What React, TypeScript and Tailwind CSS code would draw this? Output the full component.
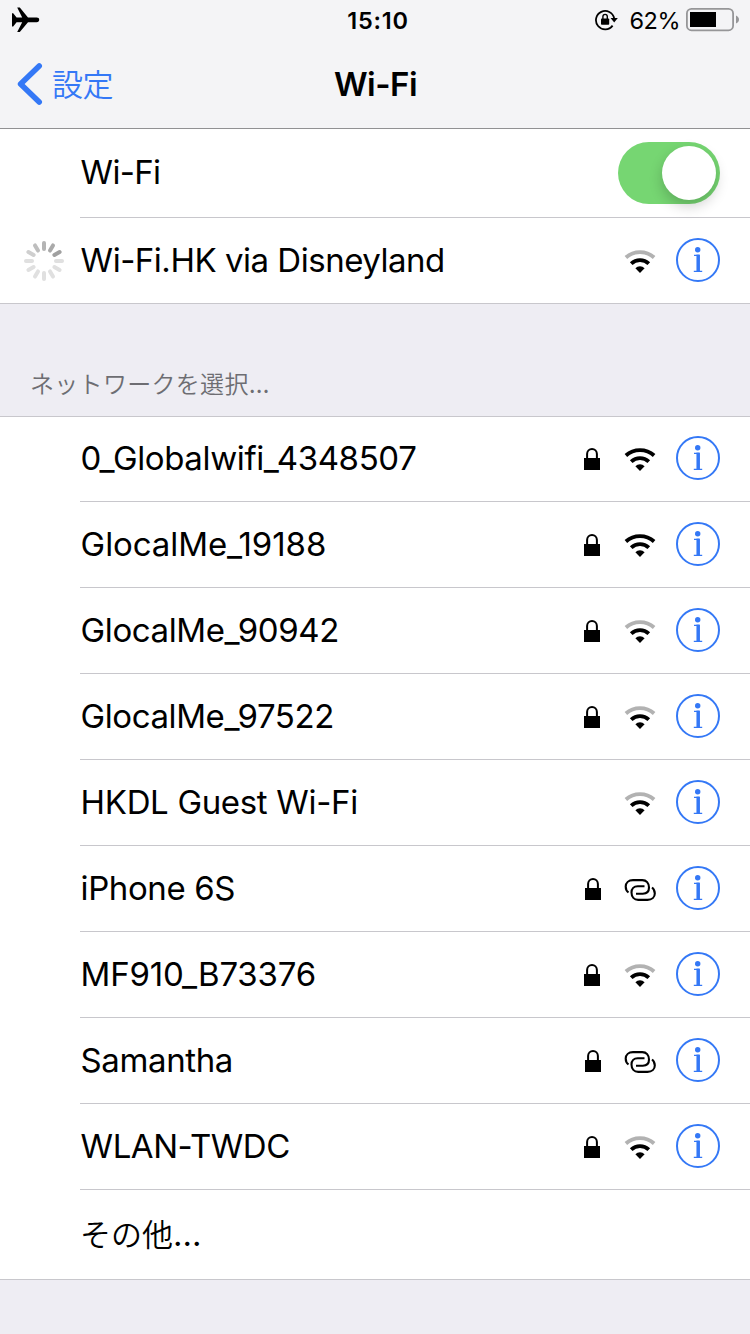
import type { ReactNode } from "react"
import clsx from "clsx"

type Signal = "strong" | "medium" | "hotspot"

interface Network {
  name: string
  secured: boolean
  signal: Signal
  tracking: string
}

const networks: Network[] = [
  { name: "0_Globalwifi_4348507", secured: true, signal: "strong", tracking: "tracking-[-0.37px]" },
  { name: "GlocalMe_19188", secured: true, signal: "strong", tracking: "tracking-[-0.08px]" },
  { name: "GlocalMe_90942", secured: true, signal: "medium", tracking: "tracking-[-0.4px]" },
  { name: "GlocalMe_97522", secured: true, signal: "medium", tracking: "tracking-[-0.42px]" },
  { name: "HKDL Guest Wi-Fi", secured: false, signal: "medium", tracking: "tracking-[-0.33px]" },
  { name: "iPhone 6S", secured: true, signal: "hotspot", tracking: "tracking-[-0.4px]" },
  { name: "MF910_B73376", secured: true, signal: "medium", tracking: "tracking-[-0.2px]" },
  { name: "Samantha", secured: true, signal: "hotspot", tracking: "tracking-[-0.4px]" },
  { name: "WLAN-TWDC", secured: true, signal: "medium", tracking: "tracking-[-0.45px]" },
]

function AirplaneIcon() {
  return (
    <svg width="28" height="26" viewBox="0 0 28 26">
      <path d="M0 6.2h1.2L4.6 10.4h5.6L5.2 0.6h2.6L16 10.4h8.6a2.6 2.4 0 0 1 0 4.8H16L7.8 25H5.2l5-9.8H4.6L1.2 19.4H0z" fill="black" />
    </svg>
  )
}

function RotationLockIcon() {
  return (
    <svg width="24" height="22" viewBox="0 0 24 22" fill="none">
      <path d="M19.2 9.4A9.2 9.2 0 1 0 17.6 16.6" stroke="black" strokeWidth="1.8" />
      <path d="M15.6 9h7.2l-3.6 4.4z" fill="black" />
      <path d="M7.9 10V7.6a2.2 2.2 0 0 1 4.4 0V10" stroke="black" strokeWidth="1.4" />
      <rect x="6" y="9.4" width="8.2" height="6.4" rx="0.8" fill="black" />
    </svg>
  )
}

function BatteryIcon() {
  return (
    <svg width="54" height="24" viewBox="0 0 54 24">
      <rect x="0.9" y="0.9" width="46.2" height="21.4" rx="4.6" fill="none" stroke="#969698" strokeWidth="1.8" />
      <rect x="4" y="4" width="26" height="15" fill="black" />
      <path d="M50 7.6c1.8 0.8 3 2.2 3 4s-1.2 3.2-3 4z" fill="#969698" />
    </svg>
  )
}

function Spinner() {
  const shades = ["#b4b4b4", "#aaaaaa", "#a0a0a0", "#e0e0e0", "#e0e0e0", "#e0e0e0", "#e0e0e0", "#e0e0e0", "#e0e0e0", "#e0e0e0", "#cfcfcf", "#bebebe"]
  return (
    <svg width="40" height="40" viewBox="0 0 40 40">
      {shades.map((shade, i) => (
        <rect key={i} x="18" y="0" width="4" height="10" rx="2" fill={shade} transform={`rotate(${i * 30} 20 20)`} />
      ))}
    </svg>
  )
}

function LockIcon() {
  return (
    <svg width="16" height="22" viewBox="0 0 16 22">
      <path d="M3.1 11V6a4.9 5 0 0 1 9.8 0V11" fill="none" stroke="black" strokeWidth="2" />
      <rect x="0" y="10" width="16" height="12" fill="black" />
    </svg>
  )
}

function WifiIcon({ strong }: { strong: boolean }) {
  return (
    <svg width="32" height="24" viewBox="0 0 32 24" fill="none">
      <path d="M1.9 7.5A21 21 0 0 1 30.1 7.5" stroke={strong ? "black" : "#b2b2b2"} strokeWidth="3.8" />
      <path d="M7.2 13.6A12.9 12.9 0 0 1 24.8 13.6" stroke="black" strokeWidth="3.8" />
      <path d="M16 23L11.4 18.2a6.6 6.6 0 0 1 9.2 0z" fill="black" />
    </svg>
  )
}

function HotspotIcon() {
  return (
    <svg width="32" height="22" viewBox="0 0 32 22" fill="none" stroke="black" strokeWidth="2.1">
      <path d="M12 14.7H18.8C22.6 14.7 25 12.3 25 8.5C25 4 22.3 1.1 18.3 1.1H9C4.6 1.1 1.7 3.9 1.7 7.5C1.7 10 2.7 12.2 4.5 13.5" />
      <path d="M20.5 7.3H13.7C9.9 7.3 7.5 9.7 7.5 13.5C7.5 18 10.2 20.9 14.2 20.9H23.5C27.900 20.9 30.8 18.1 30.8 14.5C30.8 12 29.8 9.8 28 8.5" />
    </svg>
  )
}

function InfoIcon() {
  return (
    <svg width="44" height="44" viewBox="0 0 44 44" fill="none" stroke="#3478f6">
      <circle cx="22" cy="22" r="21" strokeWidth="2" />
      <circle cx="21.7" cy="11.8" r="2.7" fill="#3478f6" stroke="none" />
      <path d="M22.2 16.6V34" strokeWidth="3.5" />
      <path d="M18 17.3H23M17.8 33.4H26.2" strokeWidth="1.3" />
    </svg>
  )
}

function NetworkIcons({ secured, signal }: { secured: boolean; signal: Signal }) {
  const hotspot = signal === "hotspot"
  return (
    <div className="flex items-start mr-[30px]">
      {secured && (
        <div className={clsx("pt-3", hotspot ? "mr-[23px]" : "mr-6")}>
          <LockIcon />
        </div>
      )}
      <div className={clsx("mr-5", hotspot ? "pt-[13px]" : "pt-3")}>
        {hotspot ? <HotspotIcon /> : <WifiIcon strong={signal === "strong"} />}
      </div>
      <InfoIcon />
    </div>
  )
}

function RowLabel({ children, className }: { children: ReactNode; className?: string }) {
  return <span className={clsx("flex-1 pl-[0.6px] text-[33px] leading-[44px] whitespace-nowrap", className)}>{children}</span>
}

export default function App() {
  return (
    <div className="w-[750px] h-[1334px] overflow-hidden bg-[#eeedf3] text-black font-['Inter','Noto_Sans_CJK_JP',sans-serif]">
      {/* Status bar and navigation */}
      <header className="h-[129px] bg-[#f4f4f6] border-b border-[#919193]">
        <div className="h-10 grid grid-cols-3 items-center">
          <div className="pl-3">
            <AirplaneIcon />
          </div>
          <span className="text-center text-[23.5px] leading-[38px] pt-0.5 font-semibold pl-1.5 tracking-[0.8px]">15:10</span>
          <div className="flex items-center justify-end pr-[10px]">
            <RotationLockIcon />
            <span className="text-[23.5px] leading-[38px] pt-0.5 ml-[11px] mr-1.5 tracking-[-0.5px]">62%</span>
            <BatteryIcon />
          </div>
        </div>
        <div className="h-[88px] grid grid-cols-3 items-center">
          <div className="flex items-center pl-[17px] text-[#3478f6]">
            <svg width="26" height="42" viewBox="0 0 26 42" fill="none">
              <path d="M22.2 3L3.6 21L22.2 39" stroke="currentColor" strokeWidth="5.6" strokeLinecap="round" strokeLinejoin="round" />
            </svg>
            <span className="ml-[9px] pt-0.5 text-[31px] leading-[42px] font-[350] tracking-[-0.5px]">設定</span>
          </div>
          <h1 className="text-center text-[33px] leading-[44px] font-semibold pl-px tracking-[-0.5px]">Wi-Fi</h1>
        </div>
      </header>

      {/* Current connection */}
      <section className="bg-white border-b border-[#c8c7cc]">
        <div className="h-[89px] ml-20 flex items-center border-b border-[#c8c7cc]">
          <RowLabel className="pb-0.5 tracking-[-0.7px]">Wi-Fi</RowLabel>
          <div className="w-[102px] h-[62px] mr-[30px] p-1 rounded-full bg-[#76d672] flex justify-end">
            <div className="size-[54px] rounded-full bg-white shadow-[0_6px_14px_rgba(0,0,0,0.2)]" />
          </div>
        </div>
        <div className="h-[85px] flex items-start pt-5">
          <div className="w-20 pl-6 pt-[3px]">
            <Spinner />
          </div>
          <RowLabel className="tracking-[-0.48px]">Wi-Fi.HK via Disneyland</RowLabel>
          <NetworkIcons secured={false} signal="medium" />
        </div>
      </section>

      <div className="h-28 pl-[30px] pt-[63px] text-[24px] leading-9 tracking-[0.3px] text-[#6d6d72]">
        <span className="font-[350]">ネットワークを選択</span>
        <span className="tracking-normal">…</span>
      </div>

      {/* Available networks */}
      <section className="bg-white border-y border-[#c8c7cc]">
        {networks.map((network, i) => (
          <div
            key={network.name}
            className={clsx("ml-20 flex items-start border-b border-[#c8c7cc]", i === 0 ? "h-[85px] pt-[19px]" : "h-[86px] pt-5")}
          >
            <RowLabel className={network.tracking}>{network.name}</RowLabel>
            <NetworkIcons secured={network.secured} signal={network.signal} />
          </div>
        ))}
        <div className="h-[89px] ml-20 flex items-center">
          <span className="text-[31px] leading-[44px]">
            <span className="font-[350]">その他</span>
            <span className="text-[33px]">…</span>
          </span>
        </div>
      </section>
    </div>
  )
}
